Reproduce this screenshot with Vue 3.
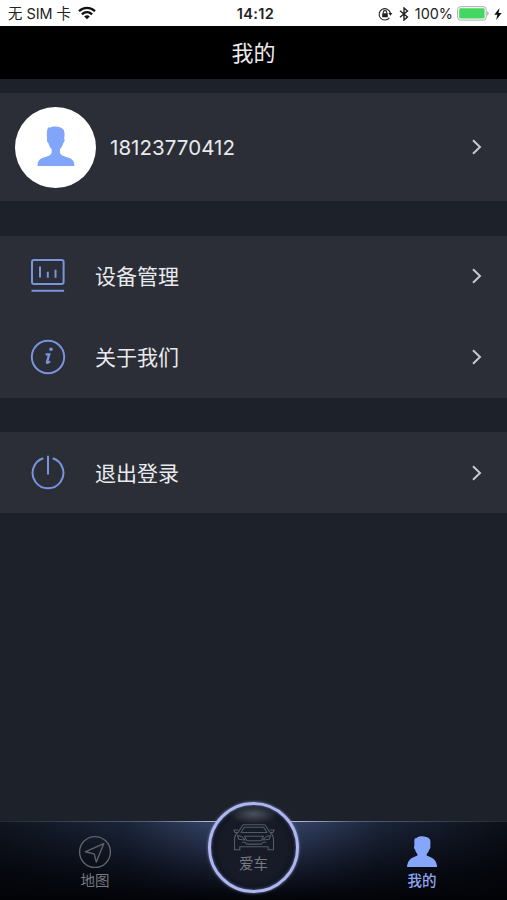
<script setup>
const groups = [
  [
    { label: '设备管理', icon: 'device' },
    { label: '关于我们', icon: 'about' },
  ],
  [{ label: '退出登录', icon: 'power' }],
]
</script>

<template>
  <div class="screen">
    <div class="status">
      <div class="carrier">
        <span>无 SIM 卡</span>
        <svg class="wifi" width="18" height="14" viewBox="0 0 18 14">
          <g fill="none" stroke="#111" stroke-width="2.3">
            <path d="M1 5.2C5.6.7 12.4.7 17 5.2" />
            <path d="M3.9 8.3c3-2.8 7.2-2.8 10.2 0" />
          </g>
          <path d="M6.2 10.4c1.7-1.5 3.9-1.5 5.6 0L9 13.3z" fill="#111" />
        </svg>
      </div>
      <div class="time">14:12</div>
      <div class="indicators">
        <svg class="lock" width="15" height="14" viewBox="0 0 15 14">
          <path d="M11.4 10.8A5.7 5.7 0 1 1 12.4 6" fill="none" stroke="#222" stroke-width="1.1" />
          <path d="M10.4 6h4L12.4 8.8z" fill="#222" />
          <path d="M5.3 6.6V5.3a1.7 1.7 0 0 1 3.4 0v1.3" fill="none" stroke="#222" stroke-width="1.1" />
          <rect x="4.2" y="6.2" width="5.6" height="4" rx=".5" fill="#222" />
        </svg>
        <svg class="bluetooth" width="10" height="14" viewBox="0 0 10 14">
          <path d="M1 3.8l7.5 6.1L5 13V1l3.5 3L1 10.2" fill="none" stroke="#222" stroke-width="1.4" />
        </svg>
        <span class="percent">100%</span>
        <svg class="battery" width="32" height="15" viewBox="0 0 32 15">
          <rect x=".6" y=".7" width="28.6" height="13.4" rx="2.8" fill="#fff" stroke="#aaa" stroke-width="1" />
          <rect x="2.2" y="2.2" width="25.4" height="10.4" rx="1.3" fill="#43d660" />
          <path d="M30.3 5.2c1.7.7 1.7 3.8 0 4.5z" fill="#999" />
        </svg>
        <svg class="bolt" width="8" height="12" viewBox="0 0 8 12">
          <path d="M5.5 0L.3 6.8h3L2.2 12l5.5-7H4.6z" fill="#111" />
        </svg>
      </div>
    </div>

    <header class="title">我的</header>

    <main class="content">
      <section class="group profile">
        <div class="avatar">
          <svg width="38" height="41" viewBox="0 0 38 41">
            <path d="M11.3 1.3l1.4.4C15.5-.2 23.5-.3 26.6 3.8c1.3 2 1 6 .6 9 .8.7.4 3.4-.9 4.2-.7 2.6-1.8 4.6-3.4 6.2v3.3c1 3.5 5.7 4.1 9.5 5.4 3.4 1.2 4.9 3.6 5.1 8H.5c.2-4.4 1.5-6.8 4.9-8 3.8-1.3 8.4-1.9 9.3-5.4v-3.3c-1.6-1.6-2.7-3.6-3.3-6.2-1.4-.8-1.9-3.5-1.2-4.2-.5-3.5-.8-8 1.1-11.5z" fill="#82a5fc" />
          </svg>
        </div>
        <span class="phone">18123770412</span>
        <svg class="chevron" width="12" height="18" viewBox="0 0 12 18"><path d="M2 2.3L9 9l-7 6.7" /></svg>
      </section>

      <section v-for="(group, i) in groups" :key="i" class="group">
        <div v-for="item in group" :key="item.label" class="row">
          <svg class="row-icon" width="36" height="36" viewBox="0 0 36 36">
            <template v-if="item.icon === 'device'">
              <rect x="2" y="2" width="31.6" height="24" rx="2" />
              <path d="M10 8.5v11M17.8 13.8v6M25.5 11.8v8M1.5 32.8h32.6" />
            </template>
            <template v-else-if="item.icon === 'about'">
              <circle cx="18" cy="18" r="16.2" />
              <path class="fine" d="M15.6 15.3h3.6l-2.3 7.9c-.2 1.1.9.9 3.2-.8" />
              <circle class="dot" cx="21" cy="10.2" r="1.8" />
            </template>
            <template v-else>
              <path d="M13.3 3.3a15.4 15.4 0 1 0 9.4 0M18 .7v18.8" />
            </template>
          </svg>
          <span class="label">{{ item.label }}</span>
          <svg class="chevron" width="12" height="18" viewBox="0 0 12 18"><path d="M2 2.3L9 9l-7 6.7" /></svg>
        </div>
      </section>
    </main>

    <nav class="tabs">
      <div class="tab map">
        <svg width="34" height="34" viewBox="0 0 34 34" fill="none" stroke="#606268" stroke-width="1.4">
          <circle cx="17" cy="17" r="15.4" />
          <path d="M25.8 8.6L7.2 16.8l9 2.1 2.1 8.2z" stroke-linejoin="round" />
        </svg>
        <span>地图</span>
      </div>
      <div class="car-slot">
        <div class="car">
          <svg width="42" height="28" viewBox="0 0 42 28" fill="none" stroke="#535b69" stroke-width="1.1" stroke-linejoin="round">
            <path d="M5.4 8L9.3 1.8C9.7 1 10.2.8 11 .8h20c.8 0 1.3.2 1.7 1L36.600 8" />
            <path d="M11.400 3.200h19.200l3.400 5.300H8z" />
            <path d="M5.200 6H.800l1.200 2.400 3 .200M36.800 6h4.400L40 8.400l-3 .200" />
            <path d="M5.400 8c-2.700 2-3.900 4.300-3.900 7.500v10.300h5.300v-3h28.400v3h5.300V15.500c0-3.200-1.200-5.500-3.900-7.500" />
            <path d="M4.500 11.500c3.600.3 6 1.800 7.300 4.500l-6-.800zM37.500 11.500c-3.600.3-6 1.800-7.300 4.500l6-.800z" />
            <path d="M11.500 12.300h19l-2.300 4.500H13.800zM8.700 18.200h3l2 1.900h14.600l2-1.900h3" />
          </svg>
          <span>爱车</span>
        </div>
      </div>
      <div class="tab mine">
        <svg width="34" height="34" viewBox="0 0 34 34">
          <path d="M9.800 3.300l1.500-.100C13.800.600 21.500.500 24.800 4.200c.900 1.600.700 4.600.4 6.600.500.800.200 3-.9 3.600-.5 1.900-1.400 3.300-2.600 4.500v1.700c3 1.300 6.400 2.400 8.300 4.900 1.100 1.500 1.900 3.600 2.100 6.500H2c.2-2.900 1-5 2.100-6.500 1.900-2.500 5.300-3.600 8.300-4.900v-1.700c-1.200-1.200-1.900-2.600-2.400-4.500-1.100-.600-1.300-2.800-.6-3.600L9.300 5.800z" fill="#86a6fb" />
        </svg>
        <span>我的</span>
      </div>
    </nav>
  </div>
</template>

<style>
body {
  background: #1d2129;
}
</style>

<style scoped>
.screen {
  display: flex;
  flex-direction: column;
  height: 900px;
  overflow: hidden;
  background: #1d2129;
  color: #e9eaed;
  font-family: Inter, "Noto Sans CJK SC", sans-serif;
}
.status {
  display: grid;
  grid-template-columns: 1fr auto 1fr;
  align-items: center;
  height: 26px;
  padding: 2px 5px 0 8px;
  box-sizing: border-box;
  background: #fff;
  color: #222;
  font-size: 14px;
  line-height: 20px;
}
.carrier,
.indicators {
  display: flex;
  align-items: center;
}
.carrier {
  gap: 7px;
  font-size: 14.4px;
}
.wifi {
  margin-top: -2px;
}
.time {
  margin-left: 1px;
  font-weight: 600;
  font-size: 14.6px;
  letter-spacing: 0.3px;
}
.indicators {
  justify-content: flex-end;
}
.percent {
  font-size: 14.4px;
}
.bluetooth {
  margin: 0 6px;
}
.battery {
  margin: -1px 5px 0 4px;
}
.title {
  height: 53px;
  background: #000;
  text-align: center;
  font-size: 22px;
  line-height: 54px;
}
.content {
  display: flex;
  flex: 1;
  flex-direction: column;
  gap: 34.5px;
  padding-top: 14px;
}
.group {
  background: #2b2e36;
}
.profile {
  display: flex;
  align-items: center;
  height: 108px;
  padding: 0 24px 0 15px;
  box-sizing: border-box;
}
.avatar {
  display: flex;
  align-items: center;
  justify-content: center;
  width: 81px;
  height: 81px;
  padding-bottom: 2px;
  box-sizing: border-box;
  border-radius: 50%;
  background: #fff;
}
.phone {
  flex: 1;
  margin-left: 14px;
  padding-top: 1px;
  font-size: 20.5px;
  letter-spacing: 0.05px;
}
.row {
  display: flex;
  align-items: center;
  height: 81px;
  padding: 0 24px 0 30px;
}
.row-icon {
  fill: none;
  stroke: #7894df;
  stroke-width: 2;
}
.fine {
  stroke-width: 2.3;
}
.dot {
  fill: #7894df;
  stroke: none;
}
.label {
  flex: 1;
  margin-left: 29px;
  padding-top: 2px;
  font-size: 21px;
  line-height: 30px;
}
.chevron {
  fill: none;
  stroke: #c7c9ce;
  stroke-width: 2;
}
.tabs {
  display: grid;
  grid-template-columns: 190px 1fr 190px;
  height: 79px;
  box-sizing: border-box;
  border-top: 1.5px solid #29303e;
  border-image: linear-gradient(90deg, #222936, #53617e 30%, #b3bddb 42%, #b3bddb 58%, #53617e 70%, #222936) 1;
  background:
    linear-gradient(180deg, transparent, rgba(0, 0, 5, 0.65) 65%, #020307 100%),
    linear-gradient(90deg, #10151f, #1b2539 25%, #40507a 50%, #1b2539 75%, #0c1018);
}
.tab {
  display: flex;
  flex-direction: column;
  align-items: center;
  padding-top: 13px;
  color: #777a80;
  font-size: 14.5px;
  line-height: 20px;
}
.tab span {
  margin-top: 2px;
}
.mine {
  padding-left: 20px;
  color: #91a5ef;
  font-weight: 500;
}
.car-slot {
  display: flex;
  justify-content: center;
}
.car {
  display: flex;
  flex-direction: column;
  flex-shrink: 0;
  align-items: center;
  width: 91px;
  height: 91px;
  margin-top: -20px;
  padding-top: 19px;
  box-sizing: border-box;
  border: 3.5px solid #afb5ed;
  border-radius: 50%;
  background:
    radial-gradient(ellipse 25px 10px at 50% 9px, #4b515c, transparent),
    radial-gradient(circle, #161b27 55%, #070c17 90%);
  box-shadow: 0 0 3px #7684bf, inset 0 0 3px #5e70aa;
  color: #777a80;
  font-size: 14.5px;
  line-height: 20px;
}
.car span {
  margin-top: 2px;
}
</style>
